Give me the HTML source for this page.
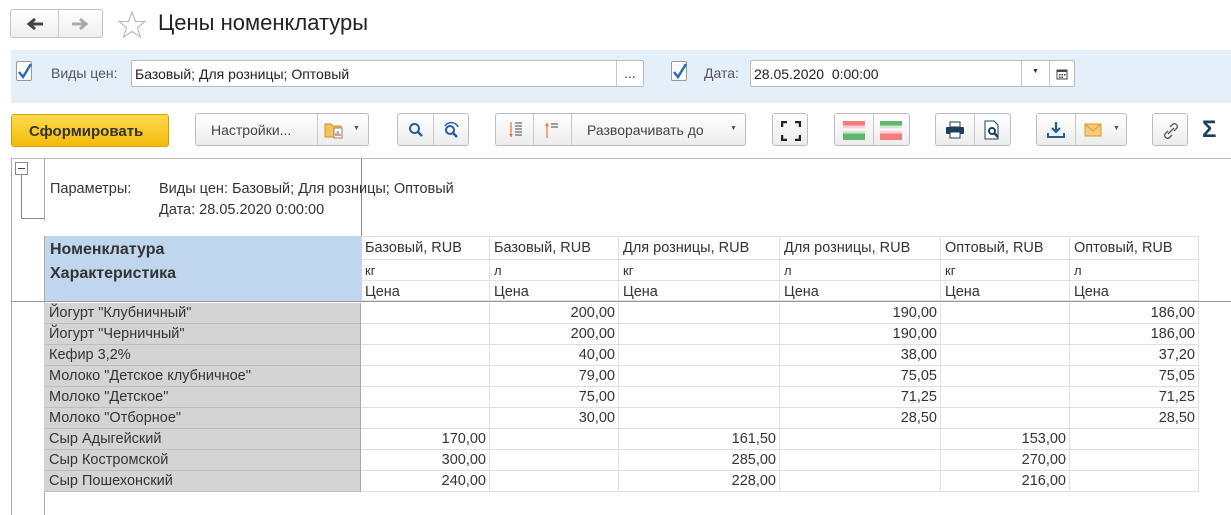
<!DOCTYPE html>
<html><head><meta charset="utf-8"><style>
*{box-sizing:border-box;margin:0;padding:0}
body{width:1231px;height:515px;background:#fff;font-family:"Liberation Sans",Arial,sans-serif;font-size:14px;color:#333;position:relative;overflow:hidden}
.a{position:absolute}
.btn{position:absolute;border:1px solid #bdbdbd;border-radius:3px;background:linear-gradient(#fff,#ececec);height:33px;top:113px}
.sep{position:absolute;top:0;bottom:0;width:1px;background:#c8c8c8}
.t{position:absolute;white-space:nowrap}
.cell{position:absolute;border-right:1px solid #e0e0e0;border-bottom:1px solid #e0e0e0;font-size:14.5px;white-space:nowrap;padding:0 4px;color:#333}
.nm{position:absolute;left:44px;width:317px;background:#d4d4d4;border-bottom:1px solid #bdbdbd;border-right:1px solid #aaa;padding-left:5px;height:21px;line-height:21px;font-size:14.5px}
.num{text-align:right;padding-right:3px}
</style></head><body>
<!-- nav -->
<div class="a" style="left:10px;top:9px;width:93px;height:29px;border:1px solid #c4c4c4;border-radius:3px;background:linear-gradient(#fff,#efefef)"><div class="sep" style="left:47px"></div>
<svg class="a" style="left:15px;top:7px" width="18" height="14"><path d="M17 7H5M9 2L3 7l6 5" fill="none" stroke="#444" stroke-width="3"/></svg>
<svg class="a" style="left:60px;top:7px" width="18" height="14"><path d="M1 7h12M9 2l6 5-6 5" fill="none" stroke="#aaa" stroke-width="3"/></svg></div>
<svg class="a" style="left:117px;top:10px" width="30" height="30"><polygon points="15,2 18.5,11.5 28,11.5 20.5,17.5 23.5,27 15,21.5 6.5,27 9.5,17.5 2,11.5 11.5,11.5" fill="none" stroke="#bbb" stroke-width="1.2"/></svg>
<div class="t" style="left:158px;top:10px;font-size:22px;color:#222">Цены номенклатуры</div>
<!-- filter bar -->
<div class="a" style="left:11px;top:50px;width:1220px;height:53px;background:#e4eff9"></div>
<div class="a" style="left:16px;top:61px;width:16px;height:20px;border:1px solid #999;background:#fff;border-radius:2px"></div>
<svg class="a" style="left:17px;top:62px" width="16" height="18"><path d="M2 10l4 5 8-13" fill="none" stroke="#2a6db5" stroke-width="2.5"/></svg>
<div class="t" style="left:51px;top:65px;color:#555">Виды цен:</div>
<div class="a" style="left:131px;top:60px;width:513px;height:27px;border:1px solid #bbb;border-radius:2px;background:#fff"><div class="t" style="left:3px;top:5px;color:#222">Базовый; Для розницы; Оптовый</div><div class="sep" style="left:484px"></div><div class="t" style="left:492px;top:4px">...</div></div>
<div class="a" style="left:671px;top:61px;width:16px;height:20px;border:1px solid #999;background:#fff;border-radius:2px"></div>
<svg class="a" style="left:672px;top:62px" width="16" height="18"><path d="M2 10l4 5 8-13" fill="none" stroke="#2a6db5" stroke-width="2.5"/></svg>
<div class="t" style="left:704px;top:65px;color:#555">Дата:</div>
<div class="a" style="left:750px;top:60px;width:325px;height:27px;border:1px solid #bbb;border-radius:2px;background:#fff"><div class="t" style="left:3px;top:5px;color:#222">28.05.2020&nbsp; 0:00:00</div><div class="sep" style="left:270px"></div><div class="sep" style="left:298px"></div><div class="t" style="left:281px;top:7px;font-size:7px">▼</div>
<svg class="a" style="left:305px;top:7px" width="12" height="12"><rect x="1" y="2" width="10" height="9" fill="none" stroke="#444"/><rect x="1" y="2" width="10" height="2" fill="#444"/><g fill="#444"><rect x="3" y="6" width="1.5" height="1.5"/><rect x="5.5" y="6" width="1.5" height="1.5"/><rect x="8" y="6" width="1.5" height="1.5"/><rect x="3" y="8.5" width="1.5" height="1.5"/><rect x="5.5" y="8.5" width="1.5" height="1.5"/></g></svg></div>
<!-- toolbar -->
<div class="a" style="left:11px;top:114px;width:158px;height:33px;border:1px solid #d5a400;border-radius:3px;background:linear-gradient(#ffd94f,#f2bb0a)"><div class="t" style="left:17px;top:8px;font-weight:bold;color:#333;font-size:15px">Сформировать</div></div>
<div class="btn" style="left:195px;width:174px"><div class="t" style="left:15px;top:8px;color:#444">Настройки...</div><div class="sep" style="left:121px"></div>
<svg class="a" style="left:128px;top:7px" width="22" height="18"><path d="M1 3h6l2 2h8v11H1z" fill="#f2c25b" stroke="#c8952a"/><rect x="10" y="7" width="8" height="10" fill="#fff" stroke="#888"/><path d="M12 15v-3M14 15v-5M16 15v-2" stroke="#c33"/></svg><div class="t" style="left:157px;top:11px;font-size:7px;color:#555">▼</div></div>
<div class="btn" style="left:397px;width:72px"><div class="sep" style="left:35px"></div>
<svg class="a" style="left:10px;top:8px" width="16" height="16"><circle cx="6.5" cy="6.5" r="4.5" fill="none" stroke="#1f5fa0" stroke-width="2"/><path d="M10 10l4 4" stroke="#1f5fa0" stroke-width="2.5"/></svg>
<svg class="a" style="left:44px;top:7px" width="18" height="18"><circle cx="8" cy="9" r="4" fill="none" stroke="#1f5fa0" stroke-width="2"/><path d="M11 12l4 4" stroke="#1f5fa0" stroke-width="2.5"/><path d="M3 5a7 6 0 0 1 13 1" fill="none" stroke="#1f5fa0" stroke-width="1.5"/></svg></div>
<div class="btn" style="left:495px;width:251px"><div class="sep" style="left:37px"></div><div class="sep" style="left:75px"></div>
<svg class="a" style="left:12px;top:7px" width="16" height="18"><path d="M3 1v15" stroke="#f07030" stroke-width="1.2"/><path d="M1 13l2 3 2-3" fill="#f07030"/><g stroke="#444"><path d="M7 2h7M7 5h7M7 8h7M7 11h7M7 14h7"/></g></svg>
<svg class="a" style="left:48px;top:7px" width="16" height="18"><path d="M3 2v15" stroke="#f07030" stroke-width="1.2"/><path d="M1 5l2-3 2 3" fill="#f07030"/><g stroke="#444"><path d="M7 3h7M7 6h7"/></g></svg>
<div class="t" style="left:91px;top:8px;color:#444">Разворачивать до</div><div class="t" style="left:234px;top:11px;font-size:7px;color:#555">▼</div></div>
<div class="btn" style="left:772px;width:36px"><svg class="a" style="left:8px;top:7px" width="20" height="20"><path d="M1 6V1h5M14 1h5v5M19 14v5h-5M6 19H1v-5" fill="none" stroke="#222" stroke-width="2.5"/></svg></div>
<div class="btn" style="left:834px;width:76px"><div class="sep" style="left:38px"></div>
<div class="a" style="left:8px;top:7px;width:22px;height:19px;background:linear-gradient(#f47c7c 0 25%,#fcd 25% 40%,#fff 40% 50%,#cfe8cf 50% 65%,#5db86a 65%)"></div>
<div class="a" style="left:45px;top:7px;width:22px;height:19px;background:linear-gradient(#5db86a 0 25%,#cfe8cf 25% 40%,#fff 40% 50%,#fcd 50% 65%,#f47c7c 65%)"></div></div>
<div class="btn" style="left:935px;width:76px"><div class="sep" style="left:38px"></div>
<svg class="a" style="left:9px;top:7px" width="20" height="18"><rect x="5" y="1" width="10" height="5" fill="#fff" stroke="#1d3f5f"/><rect x="1" y="6" width="18" height="7" rx="1" fill="#1d3f5f"/><rect x="5" y="11" width="10" height="6" fill="#fff" stroke="#1d3f5f"/></svg>
<svg class="a" style="left:47px;top:6px" width="20" height="20"><path d="M2 1h9l4 4v14H2z" fill="#fff" stroke="#1d3f5f"/><circle cx="9" cy="11" r="3" fill="none" stroke="#1d3f5f" stroke-width="2"/><path d="M11 13l4 4" stroke="#1d3f5f" stroke-width="2.5"/></svg></div>
<div class="btn" style="left:1036px;width:91px"><div class="sep" style="left:38px"></div>
<svg class="a" style="left:9px;top:7px" width="20" height="18"><path d="M10 1v10M6 7l4 4 4-4" fill="none" stroke="#1f5fa0" stroke-width="2.2"/><path d="M2 12v4h16v-4" fill="none" stroke="#1f5fa0" stroke-width="2"/></svg>
<svg class="a" style="left:47px;top:9px" width="18" height="14"><rect x="1" y="1" width="16" height="12" fill="#f5cb78" stroke="#d99a2a"/><path d="M1 1l8 7 8-7" fill="none" stroke="#d99a2a"/></svg><div class="t" style="left:76px;top:11px;font-size:7px;color:#555">▼</div></div>
<div class="btn" style="left:1152px;width:36px"><svg class="a" style="left:8px;top:7px" width="20" height="20"><path d="M9 6l3-3a3 3 0 0 1 4 4l-3 3M11 14l-3 3a3 3 0 0 1-4-4l3-3M7 13l6-6" fill="none" stroke="#555" stroke-width="1.3"/></svg></div>
<div class="t" style="left:1202px;top:116px;font-size:24px;font-weight:bold;color:#1d3f5f">Σ</div>
<div class="a" style="left:11px;top:158px;width:1220px;height:1px;background:#bbb"></div>
<!-- report -->
<div class="a" style="left:11px;top:159px;width:1px;height:356px;background:#aaa"></div>
<div class="a" style="left:44px;top:159px;width:1px;height:62px;background:#aaa"></div>
<div class="a" style="left:361px;top:159px;width:1px;height:77px;background:#888"></div>
<div class="a" style="left:15px;top:162px;width:13px;height:13px;border:1px solid #888;background:#fff"><div class="a" style="left:2px;top:5px;width:7px;height:1px;background:#444"></div></div>
<div class="a" style="left:21px;top:175px;width:1px;height:43px;background:#888"></div>
<div class="a" style="left:21px;top:218px;width:23px;height:1px;background:#888"></div>
<div class="t" style="left:50px;top:181px;font-size:14.5px">Параметры:</div>
<div class="t" style="left:159px;top:181px;font-size:14.5px">Виды цен: Базовый; Для розницы; Оптовый</div>
<div class="t" style="left:159px;top:202px;font-size:14.5px">Дата: 28.05.2020 0:00:00</div>
<div class="a" style="left:44px;top:236px;width:318px;height:65px;background:#bfd6ee;border-left:1px solid #aaa"></div>
<div class="t" style="left:50px;top:241px;font-size:16px;font-weight:bold;color:#333">Номенклатура</div>
<div class="t" style="left:50px;top:265px;font-size:16px;font-weight:bold;color:#333">Характеристика</div>
<div class="a" style="left:11px;top:301px;width:1220px;height:1px;background:#999"></div>
<div class="a" style="left:44px;top:302px;width:1px;height:213px;background:#aaa"></div>
<div id="hdr"></div>
<script>
var cols=[361,490,619,780,941,1070,1199];
var hd=["Базовый, RUB","Базовый, RUB","Для розницы, RUB","Для розницы, RUB","Оптовый, RUB","Оптовый, RUB"];
var un=["кг","л","кг","л","кг","л"];
var rows=[["Йогурт \"Клубничный\"","","200,00","","190,00","","186,00"],["Йогурт \"Черничный\"","","200,00","","190,00","","186,00"],["Кефир 3,2%","","40,00","","38,00","","37,20"],["Молоко \"Детское клубничное\"","","79,00","","75,05","","75,05"],["Молоко \"Детское\"","","75,00","","71,25","","71,25"],["Молоко \"Отборное\"","","30,00","","28,50","","28,50"],["Сыр Адыгейский","170,00","","161,50","","153,00",""],["Сыр Костромской","300,00","","285,00","","270,00",""],["Сыр Пошехонский","240,00","","228,00","","216,00",""]];
var h="";
for(var i=0;i<6;i++){var l=cols[i],w=cols[i+1]-l;
h+='<div class="cell" style="left:'+l+'px;top:236px;width:'+w+'px;height:24px;line-height:22px;border-top:1px solid #e0e0e0">'+hd[i]+'</div>';
h+='<div class="cell" style="left:'+l+'px;top:260px;width:'+w+'px;height:21px;line-height:21px;font-size:13px">'+un[i]+'</div>';
h+='<div class="cell" style="left:'+l+'px;top:281px;width:'+w+'px;height:20px;line-height:22px">Цена</div>';}
for(var r=0;r<rows.length;r++){var t=303+r*21;
h+='<div class="nm" style="top:'+t+'px">'+rows[r][0]+'</div>';
for(var i=0;i<6;i++){var l=cols[i],w=cols[i+1]-l;
h+='<div class="cell num" style="left:'+l+'px;top:'+t+'px;width:'+w+'px;height:21px;line-height:21px">'+rows[r][i+1]+'</div>';}}
document.getElementById("hdr").innerHTML=h;
</script>
</body></html>
